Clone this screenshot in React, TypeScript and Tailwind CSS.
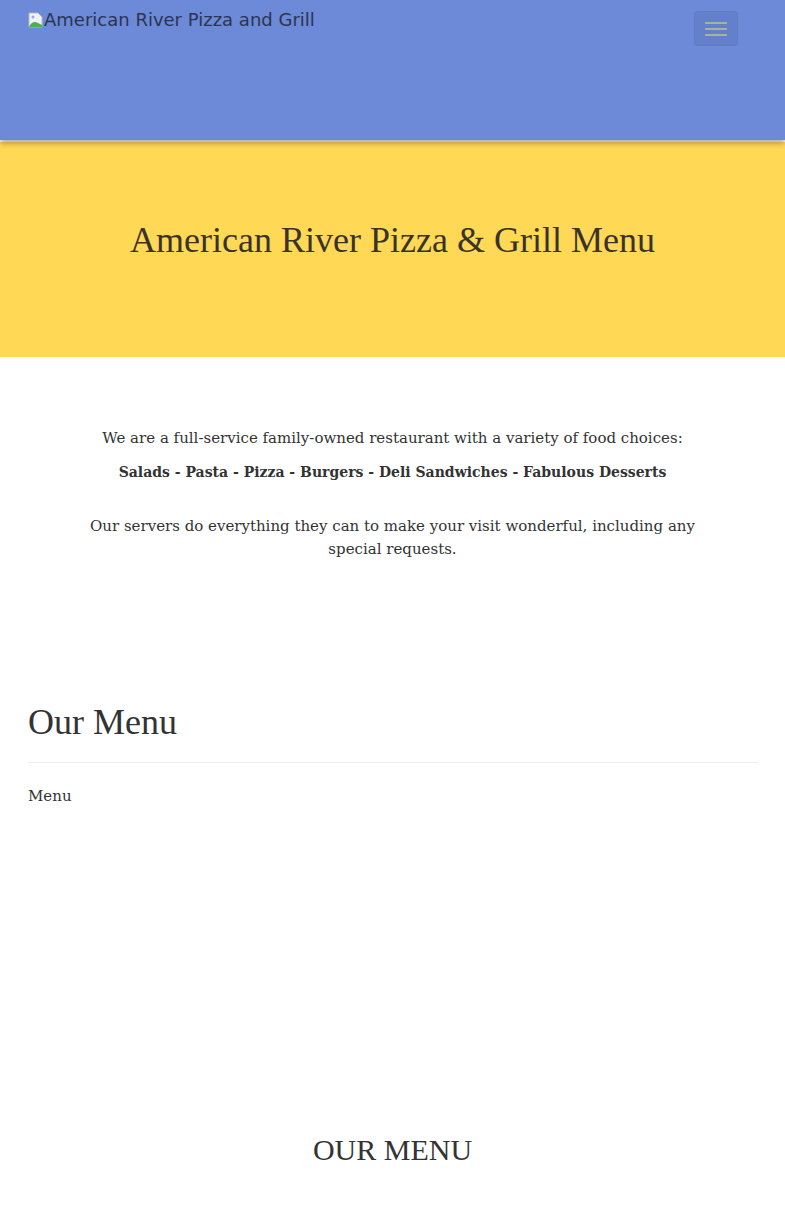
import React from "react";

const serif = "font-['DejaVu_Serif',serif]";
const times = "font-['Liberation_Serif',serif]";

function BrokenImage() {
  return (
    <svg width="16" height="16" viewBox="0 0 16 16" className="shrink-0">
      <path d="M1 1h9l4 4v10H1z" fill="#f2f2f2" stroke="#b9b9b9" strokeWidth="1" />
      <path d="M1 15c2-5 6-6 9-4l4 2v2z" fill="#4caf50" />
      <circle cx="5" cy="5" r="1.5" fill="#9ad" />
    </svg>
  );
}

export default function App() {
  return (
    <div className="min-h-[1206px] bg-white text-[#333]">
      <header className="relative z-10 h-[140px] bg-[#6c8ad7] shadow-[0_3px_6px_rgba(0,0,0,0.35)]">
        <div className="flex items-start justify-between pl-[28px] pr-[47px] pt-[11px]">
          <div className="flex items-center font-['DejaVu_Sans',sans-serif] text-[18px] leading-[18px] text-[#2b3452]">
            <BrokenImage />
            <span>American River Pizza and Grill</span>
          </div>
          <button className="flex h-[35px] w-[44px] flex-col items-center justify-center gap-[4px] rounded-[4px] border border-[#5f7cc4] bg-[#6480cc]">
            <span className="block h-[2px] w-[22px] bg-[#a9b39a]" />
            <span className="block h-[2px] w-[22px] bg-[#a9b39a]" />
            <span className="block h-[2px] w-[22px] bg-[#a9b39a]" />
          </button>
        </div>
      </header>

      <section className="mt-[2px] flex h-[215px] items-center justify-center bg-[#ffd955]">
        <h1 className={`${times} pb-[20px] text-[36px] text-[#3a3328]`}>American River Pizza &amp; Grill Menu</h1>
      </section>

      <section className={`${serif} px-[86px] pt-[70px] text-center text-[15px] leading-[23px]`}>
        <p>We are a full-service family-owned restaurant with a variety of food choices:</p>
        <p className="mt-[11px] text-[14px] font-bold">Salads - Pasta - Pizza - Burgers - Deli Sandwiches - Fabulous Desserts</p>
        <p className="mt-[31px]">Our servers do everything they can to make your visit wonderful, including any special requests.</p>
      </section>

      <section className="px-[28px] pt-[141px]">
        <h2 className={`${times} text-[36px] leading-[40px]`}>Our Menu</h2>
        <hr className="mt-[20px] border-[#eee]" />
        <p className={`${serif} mt-[22px] text-[15px] leading-[23px]`}>Menu</p>
      </section>

      <section className="pt-[325px] text-center">
        <h2 className={`${times} text-[30px] leading-[34px]`}>OUR MENU</h2>
      </section>
    </div>
  );
}
